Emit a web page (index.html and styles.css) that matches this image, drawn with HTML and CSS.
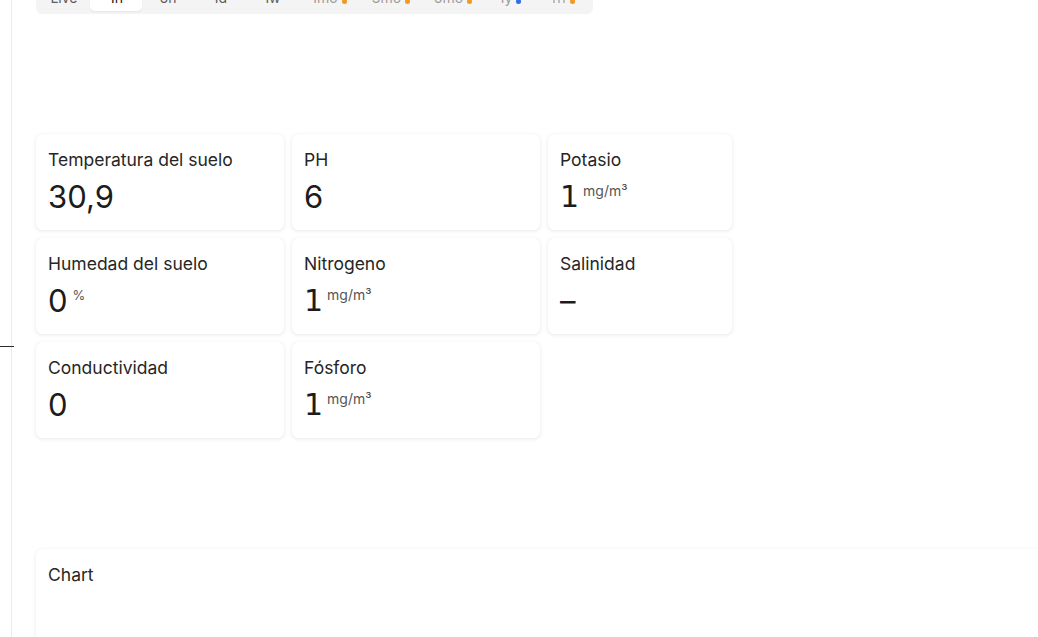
FILE: index.html
```html
<!DOCTYPE html>
<html lang="es">
<head>
<meta charset="utf-8">
<link rel="stylesheet" href="styles.css">
</head>
<body>
<div class="layout">
  <aside class="rail"><span class="rail-handle"></span></aside>
  <main class="main">
    <nav class="range-bar">
      <span class="tab">Live</span>
      <span class="tab active">1h</span>
      <span class="tab">6h</span>
      <span class="tab">1d</span>
      <span class="tab">1w</span>
      <span class="tab wide muted">1mo<i class="dot orange"></i></span>
      <span class="tab wide muted">3mo<i class="dot orange"></i></span>
      <span class="tab wide muted">6mo<i class="dot orange"></i></span>
      <span class="tab muted">1y<i class="dot blue"></i></span>
      <span class="tab icon muted">
        <svg width="14" height="14" viewBox="0 0 14 14" fill="none" stroke="#9a9a9a" stroke-width="1.2"><path d="M2 1v12M12 1v12M7 1v12M4.5 6h5"/></svg>
        <i class="dot orange"></i>
      </span>
    </nav>

    <section class="metrics">
      <div class="card"><div class="label">Temperatura del suelo</div><div class="value">30,9</div></div>
      <div class="card"><div class="label">PH</div><div class="value">6</div></div>
      <div class="card"><div class="label">Potasio</div><div class="value"><span class="one">1</span><span class="unit">mg/m³</span></div></div>
      <div class="card"><div class="label">Humedad del suelo</div><div class="value">0<span class="unit pct">%</span></div></div>
      <div class="card"><div class="label">Nitrogeno</div><div class="value"><span class="one">1</span><span class="unit">mg/m³</span></div></div>
      <div class="card"><div class="label">Salinidad</div><div class="value">–</div></div>
      <div class="card"><div class="label">Conductividad</div><div class="value">0</div></div>
      <div class="card"><div class="label">Fósforo</div><div class="value"><span class="one">1</span><span class="unit">mg/m³</span></div></div>
    </section>

    <section class="card chart">
      <div class="label">Chart</div>
    </section>
  </main>
</div>
</body>
</html>
```
FILE: styles.css
```css
html, body {
  margin: 0;
  padding: 0;
  background: #fff;
  overflow: hidden;
  height: 637px;
}
body {
  font-family: Inter, "Noto Sans", sans-serif;
  color: #1f1f1f;
}
.layout {
  display: flex;
  height: 637px;
  overflow: hidden;
}
.rail {
  position: relative;
  width: 11px;
  flex: none;
  border-right: 1px solid #ececec;
}
.rail-handle {
  position: absolute;
  left: 0;
  top: 346px;
  width: 14px;
  height: 1px;
  background: #2a2a2a;
}
.main {
  flex: 1;
  padding-left: 24px;
  margin-top: -20px;
  min-width: 0;
}
.range-bar {
  display: inline-flex;
  background: #f4f4f4;
  border-radius: 6px;
  padding: 3px 3px 3px 2px;
  height: 28px;
}
.tab {
  width: 52px;
  display: flex;
  align-items: center;
  justify-content: center;
  gap: 4px;
  font-size: 14px;
  color: #5c5c5c;
  border-radius: 5px;
}
.tab.wide { width: 62px; }
.tab.icon { width: 54px; }
.tab.muted { color: #9c9c9c; }
.tab.active {
  background: #fff;
  color: #1a1a1a;
  box-shadow: 0 1px 2px rgba(0,0,0,0.06);
}
.dot {
  width: 5px;
  height: 5px;
  border-radius: 50%;
  display: inline-block;
  margin-top: 9px;
}
.dot.orange { background: #f39a1e; }
.dot.blue { background: #2f6fe6; }

.metrics {
  margin-top: 120px;
  display: grid;
  grid-template-columns: 248px 248px 184px;
  grid-auto-rows: 96px;
  gap: 8px;
}
.card {
  background: #fff;
  border-radius: 6px;
  box-shadow: 0 1px 4px rgba(0,0,0,0.09), 0 0 1px rgba(0,0,0,0.05);
  padding: 15px 12px 0;
  box-sizing: border-box;
}
.label {
  font-size: 17.5px;
  line-height: 21px;
  color: #262626;
  margin-bottom: 9px;
}
.value {
  display: flex;
  align-items: flex-start;
  font-size: 31px;
  line-height: 36px;
  color: #1c1c1c;
}
.one {
  font-family: "DejaVu Sans", sans-serif;
  font-size: 30px;
}
.unit {
  font-size: 14px;
  line-height: 16px;
  color: #555;
  margin-left: 4px;
  margin-top: 4px;
}
.unit.pct {
  font-size: 13px;
  margin-left: 5px;
  margin-top: 4px;
}
.chart {
  margin-top: 111px;
  width: 1040px;
  height: 200px;
}
```
